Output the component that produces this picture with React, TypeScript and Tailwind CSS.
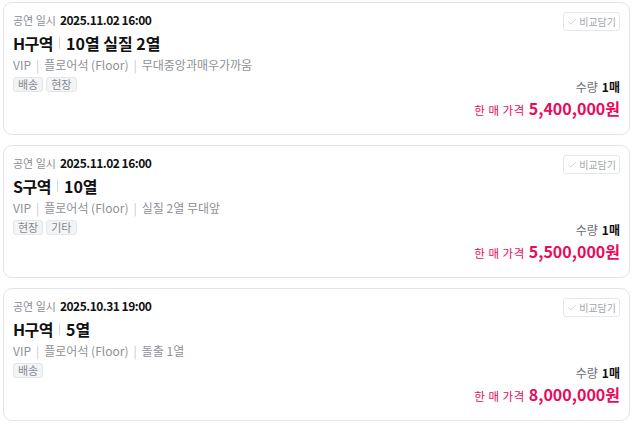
import { Check } from "lucide-react";

const listings = [
  {
    date: "2025.11.02 16:00",
    zone: "H구역",
    seat: "10열 실질 2열",
    info: ["VIP", "플로어석 (Floor)", "무대중앙과매우가까움"],
    tags: ["배송", "현장"],
    qty: 1,
    price: "5,400,000",
  },
  {
    date: "2025.11.02 16:00",
    zone: "S구역",
    seat: "10열",
    info: ["VIP", "플로어석 (Floor)", "실질 2열 무대앞"],
    tags: ["현장", "기타"],
    qty: 1,
    price: "5,500,000",
  },
  {
    date: "2025.10.31 19:00",
    zone: "H구역",
    seat: "5열",
    info: ["VIP", "플로어석 (Floor)", "돌출 1열"],
    tags: ["배송"],
    qty: 1,
    price: "8,000,000",
  },
];

export default function App() {
  return (
    <div
      className="w-[640px] h-[430px] bg-white pl-[3px] pt-[2px] flex flex-col gap-[10px]"
      style={{ fontFamily: '"Noto Sans CJK KR", "Noto Sans", sans-serif' }}
    >
      {listings.map((item, i) => (
        <div
          key={i}
          className="w-[627px] h-[133px] rounded-[9px] border border-[#e3e5ea] bg-white flex justify-between pl-[9px] pr-[9px] pt-[7px] pb-[14px]"
        >
          <div className="flex flex-col">
            <div className="flex items-center gap-[4px] h-[20px]">
              <span className="text-[11px] text-[#8a8d93]">공연 일시</span>
              <span className="text-[12px] font-semibold text-[#111] tracking-[-0.5px]">
                {item.date}
              </span>
            </div>
            <div className="flex items-center h-[26px]">
              <span className="text-[16px] font-semibold text-[#111] tracking-[-0.5px]">
                {item.zone}
              </span>
              <span className="w-px h-[12px] bg-[#d5d7db] mx-[6px]" />
              <span className="text-[16px] font-semibold text-[#111]">{item.seat}</span>
            </div>
            <div className="flex items-center h-[18px] text-[12px] text-[#8e9197]">
              {item.info.map((t, j) => (
                <span key={j} className="flex items-center">
                  {j > 0 && <span className="text-[#c4c6ca] mx-[5px]">|</span>}
                  {t}
                </span>
              ))}
            </div>
            <div className="flex gap-[3px] mt-[3px]">
              {item.tags.map((t) => (
                <span
                  key={t}
                  className="h-[15px] px-[4px] flex items-center text-[11px] text-[#85888e] bg-[#f3f4f6] border border-[#e4e6ea] rounded-[3px]"
                >
                  {t}
                </span>
              ))}
            </div>
          </div>
          <div className="flex flex-col items-end justify-between">
            <button className="mt-[2px] h-[19px] px-[3px] flex items-center gap-[2px] border border-[#e5e7eb] rounded-[3px] text-[10px] text-[#a4a7ad]">
              <Check className="w-[10px] h-[10px] text-[#c2c5ca]" strokeWidth={2} />
              비교담기
            </button>
            <div className="flex flex-col items-end">
              <div className="text-[12px] text-[#6b6e74] flex items-center gap-[4px]">
                수량 <span className="font-bold text-[#111]">{item.qty}매</span>
              </div>
              <div className="flex items-baseline gap-[4px] text-[#ea0a5c]">
                <span className="text-[11.5px] tracking-[0.5px]">한 매 가격</span>
                <span className="text-[16px] font-bold">{item.price}원</span>
              </div>
            </div>
          </div>
        </div>
      ))}
    </div>
  );
}
